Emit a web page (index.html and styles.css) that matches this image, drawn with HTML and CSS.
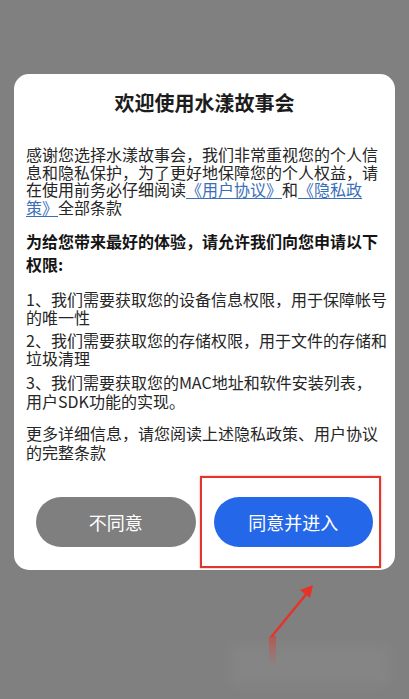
FILE: index.html
```html
<!DOCTYPE html>
<html lang="zh-CN">
<head>
<meta charset="utf-8">
<title>欢迎使用水漾故事会</title>
<link rel="stylesheet" href="styles.css">
</head>
<body>
<div class="screen">
  <div class="card">
    <h1 class="title">欢迎使用水漾故事会</h1>
    <p class="intro">感谢您选择水漾故事会，我们非常重视您的个人信<br>息和隐私保护，为了更好地保障您的个人权益，请<br>在使用前务必仔细阅读<a class="link">《用户协议》</a>和<a class="link">《隐私政<br>策》</a>全部条款</p>
    <p class="ask">为给您带来最好的体验，请允许我们向您申请以下<br>权限:</p>
    <p class="item first">1、我们需要获取您的设备信息权限，用于保障帐号<br>的唯一性</p>
    <p class="item">2、我们需要获取您的存储权限，用于文件的存储和<br>垃圾清理</p>
    <p class="item latin">3、我们需要获取您的MAC地址和软件安装列表，<br>用户SDK功能的实现。</p>
    <p class="more">更多详细信息，请您阅读上述隐私政策、用户协议<br>的完整条款</p>
    <div class="actions">
      <button class="btn btn-no">不同意</button>
      <button class="btn btn-yes">同意并进入</button>
    </div>
  </div>
  <div class="highlight"></div>
  <svg class="arrow" width="60" height="100" viewBox="0 0 60 100">
    <defs>
      <linearGradient id="tail" x1="0" y1="0" x2="0" y2="1">
        <stop offset="0" stop-color="#e0362c" stop-opacity="0.55"/>
        <stop offset="1" stop-color="#e0362c" stop-opacity="0"/>
      </linearGradient>
    </defs>
    <rect x="9" y="52" width="7" height="30" fill="url(#tail)"/>
    <line x1="12" y1="52" x2="48" y2="8" stroke="#e53328" stroke-width="2.4" stroke-linecap="round"/>
    <polygon points="53,1 40,6 50,14" fill="#e53328"/>
  </svg>
  <div class="watermark"></div>
</div>
</body>
</html>
```

FILE: styles.css
```css
html, body {
  margin: 0;
  padding: 0;
  background: #808080;
}

.screen {
  position: relative;
  width: 409px;
  height: 699px;
  padding-top: 74px;
  box-sizing: border-box;
  font-family: "Noto Sans CJK SC", "Noto Sans", sans-serif;
}

.card {
  margin: 0 14px;
  background: #ffffff;
  border-radius: 15px;
  padding: 15px 6px 23px 12px;
  color: #262626;
}

.title {
  margin: 0;
  font-size: 20px;
  line-height: 28px;
  font-weight: bold;
  text-align: center;
  color: #1c1c1c;
  padding-right: 6px;
}

.intro {
  margin: 29px 0 0 0;
  font-size: 16px;
  line-height: 17.7px;
}

.link {
  color: #3a6fb8;
  text-decoration: underline;
  text-underline-offset: 2px;
}

.ask {
  margin: 13px 0 0 0;
  font-size: 16px;
  line-height: 23px;
  font-weight: bold;
  color: #141414;
}

.item {
  margin: 5px 0 0 0;
  font-size: 16px;
  line-height: 18px;
}

.item.first {
  margin-top: 14px;
}

.item.latin {
  margin-top: 6px;
  line-height: 19.5px;
}

.more {
  margin: 12px 0 0 0;
  font-size: 16px;
  line-height: 19px;
}

.actions {
  display: flex;
  gap: 18px;
  margin: 35px 16px 0 10px;
}

.btn {
  flex: 1;
  height: 50px;
  border: none;
  border-radius: 25px;
  color: #ffffff;
  font-family: "Noto Sans CJK SC", "Noto Sans", sans-serif;
  font-size: 18px;
  padding: 0;
}

.btn-no {
  background: #7f7f7f;
}

.btn-yes {
  background: #2567e9;
}

.highlight {
  position: absolute;
  left: 200px;
  top: 476px;
  width: 181px;
  height: 92px;
  box-sizing: border-box;
  border: 2px solid #e2352b;
  box-shadow: 0 0 2px rgba(226, 53, 43, 0.5);
}

.arrow {
  position: absolute;
  left: 260px;
  top: 584px;
}

.watermark {
  position: absolute;
  left: 230px;
  top: 645px;
  width: 160px;
  height: 40px;
  background: rgba(255, 255, 255, 0.04);
  filter: blur(6px);
}
```
